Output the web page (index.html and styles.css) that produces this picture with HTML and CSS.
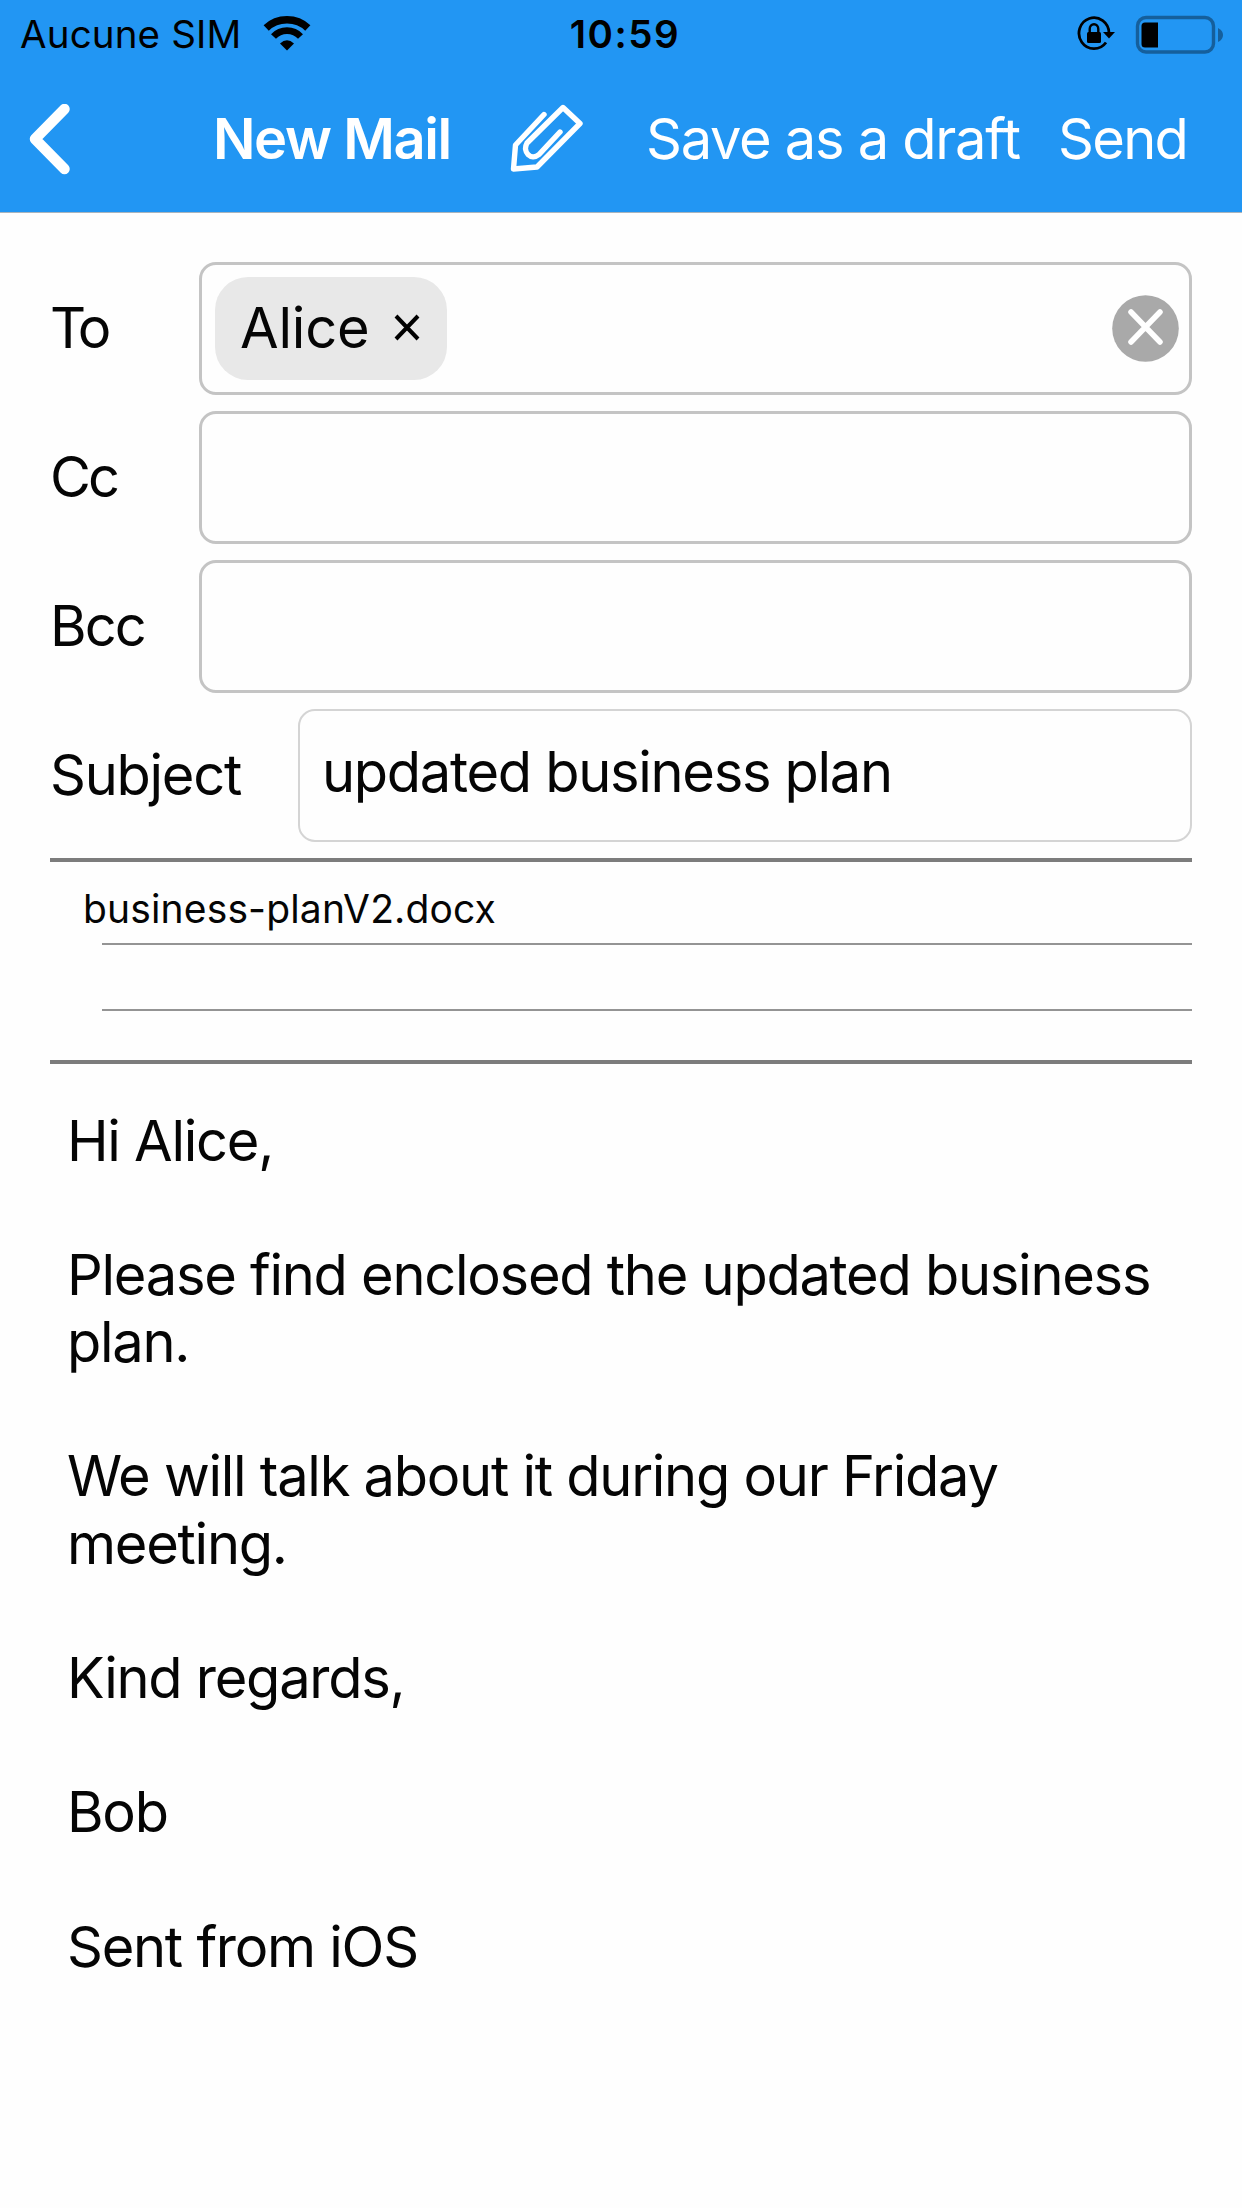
FILE: index.html
```html
<!DOCTYPE html>
<html lang="en">
<head>
<meta charset="utf-8">
<title>New Mail</title>
<link rel="stylesheet" href="styles.css">
</head>
<body>
<header class="top">
  <div class="status">
    <div class="status-left">
      <span class="carrier">Aucune SIM</span>
      <svg class="wifi" width="48" height="36" viewBox="0 0 48 36">
        <path d="M3.200 12A29 27 0 0 1 44.800 12" fill="none" stroke="#000" stroke-width="7.500"/>
        <path d="M10.500 20.500A18.500 18.500 0 0 1 37.500 20.500" fill="none" stroke="#000" stroke-width="6.800"/>
        <path d="M17 27.500Q24 21 31 27.500L24 34.500Z"/>
      </svg>
    </div>
    <time class="clock">10:59</time>
    <div class="status-right">
      <svg class="lock" width="38" height="36" viewBox="0 0 38 36">
        <path d="M32 17A15 15.500 0 1 0 29 26.500" fill="none" stroke="#000" stroke-width="2.800"/>
        <path d="M26 16h12l-6 6.500z"/>
        <rect x="10" y="16" width="14" height="11" rx="1.500"/>
        <path d="M12.700 17v-4a4.300 4.800 0 0 1 8.600 0v4" fill="none" stroke="#000" stroke-width="2.400"/>
      </svg>
      <svg class="battery" width="90" height="40" viewBox="0 0 90 40">
        <rect x="2.500" y="2.500" width="76" height="34.500" rx="8.500" fill="none" stroke="#155f9c" stroke-width="3.400"/>
        <path d="M10 7.500h13v25h-13q-3.500 0-3.500-3.500v-18q0-3.500 3.500-3.500z"/>
        <path d="M83 13q5 2.500 5 7t-5 7z" fill="#155f9c"/>
      </svg>
    </div>
  </div>
  <nav class="bar">
    <svg class="back" width="44" height="72" viewBox="0 0 44 72"><path d="M36.500 5L7 35L36.500 65" fill="none" stroke="#fff" stroke-width="10.500" stroke-linecap="round" stroke-linejoin="round"/></svg>
    <h1 class="title">New Mail</h1>
    <svg class="clip" width="76" height="72" viewBox="0 0 76 72">
      <path d="M35 10.500L6.500 41L4.500 65L28 63L71 19.500L54 3.500L18 39C13 48 22 57 30 50.500L51 28" fill="none" stroke="#fff" stroke-width="5.400" stroke-linecap="round" stroke-linejoin="round"/>
    </svg>
    <a class="draft">Save as a draft</a>
    <a class="send">Send</a>
  </nav>
</header>
<main class="mail">
  <div class="row">
    <span class="label to">To</span>
    <div class="field">
      <span class="chip"><span class="name">Alice</span>
        <svg width="28" height="28" viewBox="0 0 28 28"><path d="M3 2L25 25M25 2L3 25" stroke="#000" stroke-width="4"/></svg>
      </span>
      <svg class="clear" width="67" height="67" viewBox="0 0 67 67"><circle cx="33.500" cy="33.500" r="33.300" fill="#a9a9a9"/><path d="M19 17L48 47M48 17L19 47" stroke="#fff" stroke-width="5.500" stroke-linecap="round"/></svg>
    </div>
  </div>
  <div class="row"><span class="label cc">Cc</span><div class="field"></div></div>
  <div class="row"><span class="label bcc">Bcc</span><div class="field"></div></div>
  <div class="row"><span class="label subject-label">Subject</span><div class="field subject"><span class="subject-text">updated business plan</span></div></div>
  <section class="files">
    <div class="file"><span class="file-name">business-planV2.docx</span></div>
    <div class="file empty"></div>
  </section>
  <section class="message">
    <p>Hi Alice,</p>
    <p>Please find enclosed the updated business<br>plan.</p>
    <p>We will talk about it during our Friday<br>meeting.</p>
    <p>Kind regards,</p>
    <p>Bob</p>
    <p>Sent from iOS</p>
  </section>
</main>
</body>
</html>
```
FILE: styles.css
```css
* { box-sizing: border-box; }
body { margin: 0; width: 1242px; height: 2208px; overflow: hidden; background: #fefefe; color: #050505; font: 56px/67px Inter, "Liberation Sans", sans-serif; letter-spacing: -1.270px; white-space: nowrap; }
svg { display: block; flex: none; }
.top { height: 213px; background: #2296f3; border-bottom: 1px solid #a9b4bd; }
.status { height: 68px; display: grid; grid-template-columns: 1fr auto 1fr; color: #000; font-size: 38.500px; line-height: 68px; letter-spacing: 0.150px; }
.status-left { display: flex; padding-left: 20px; }
.carrier { width: 243px; }
.wifi { margin-top: 16px; }
.clock { font-weight: 600; letter-spacing: 1.500px; padding-left: 8px; }
.status-right { display: flex; justify-content: flex-end; padding: 16px 17px 0 0; gap: 20px; }
.battery { margin-top: -1px; }
.bar { display: flex; color: #fff; padding-top: 33px; line-height: 76px; }
.back { margin: 3px 0 0 28px; }
.title { margin: 0 0 0 141px; width: 296px; font-size: 56px; font-weight: 600; letter-spacing: -1.400px; }
.clip { margin: 3px 0 0 0; }
.draft { margin-left: 61px; width: 412px; letter-spacing: -1.300px; }
.send { letter-spacing: -1.700px; }
.mail { padding: 48.500px 50px 0; }
.row { display: flex; height: 133px; margin-bottom: 16px; }
.label { width: 149px; line-height: 133px; }
.to { letter-spacing: -4px; }
.cc { letter-spacing: -3px; }
.bcc { letter-spacing: -2px; }
.field { flex: 1; display: flex; align-items: center; justify-content: space-between; border: 3px solid #c4c4c4; border-radius: 17px; padding: 0 10px 0 13px; }
.chip { display: flex; align-items: center; width: 232px; height: 103px; border-radius: 33px; padding-left: 25px; background: #e8e8e8; }
.name { width: 153px; letter-spacing: -0.200px; padding-top: 1px; }
.subject-label { width: 248px; }
.subject { border-width: 2px; border-color: #d4d4d4; padding: 0 22px; line-height: 120px; }
.subject-text { margin-top: -6px; letter-spacing: -1.300px; }
.files { height: 206px; border-top: 4px solid #7c7c7c; border-bottom: 4px solid #7c7c7c; padding-left: 52px; }
.file { height: 83px; border-bottom: 2px solid #949494; font-size: 39px; line-height: 93px; letter-spacing: 0.150px; }
.file-name { margin-left: -19px; }
.empty { height: 66px; }
.message { padding: 44px 17px; line-height: 67.200px; }
.message p { margin: 0 0 67.200px; }
```
